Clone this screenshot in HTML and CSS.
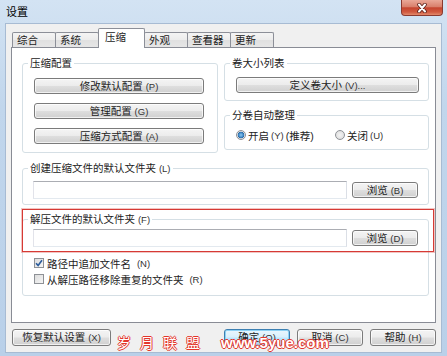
FILE: index.html
```html
<!DOCTYPE html>
<html lang="zh-CN">
<head>
    <meta charset="UTF-8">
    <meta name="viewport" content="width=device-width, initial-scale=1.0">
    <title>设置</title>
    <link rel="stylesheet" href="styles.css">
</head>
<body>
    <div class="window">
        <div class="titlebar">
            <span class="title">设置</span>
            <button class="close-btn">
                <svg width="16" height="10" viewBox="0 0 16 10">
                    <path d="M5 1.5 L11 8.5 M11 1.5 L5 8.5" stroke="#5b2119" stroke-width="3.6" stroke-linecap="round"/>
                    <path d="M5 1.5 L11 8.5 M11 1.5 L5 8.5" stroke="#fff" stroke-width="2" stroke-linecap="round"/>
                </svg>
            </button>
        </div>
        <div class="client">
            <div class="tabs">
                <div class="tab">综合</div>
                <div class="tab">系统</div>
                <div class="tab active">压缩</div>
                <div class="tab">外观</div>
                <div class="tab">查看器</div>
                <div class="tab">更新</div>
            </div>
            <div class="panel">
                <div class="top-row">
                    <fieldset class="group profiles">
                        <legend>压缩配置</legend>
                        <div class="group-body stack">
                            <button class="button">修改默认配置 <small>(P)</small></button>
                            <button class="button">管理配置 <small>(G)</small></button>
                            <button class="button">压缩方式配置 <small>(A)</small></button>
                        </div>
                    </fieldset>
                    <div class="side-col">
                        <fieldset class="group">
                            <legend>卷大小列表</legend>
                            <div class="group-body volumes">
                                <button class="button">定义卷大小 <small>(V)...</small></button>
                            </div>
                        </fieldset>
                        <fieldset class="group">
                            <legend>分卷自动整理</legend>
                            <div class="group-body radios">
                                <label class="radio first"><span class="radio-mark checked"></span>开启<small>(Y)</small> (推荐)</label>
                                <label class="radio"><span class="radio-mark"></span>关闭<small>(U)</small></label>
                            </div>
                        </fieldset>
                    </div>
                </div>
                <fieldset class="group create-folder">
                    <legend>创建压缩文件的默认文件夹 <small>(L)</small></legend>
                    <div class="group-body path-row">
                        <input type="text" class="path-input">
                        <button class="button browse">浏览 <small>(B)</small></button>
                    </div>
                </fieldset>
                <fieldset class="group extract-folder">
                    <legend>解压文件的默认文件夹 <small>(F)</small></legend>
                    <div class="group-body extract-body">
                        <div class="path-row">
                            <input type="text" class="path-input">
                            <button class="button browse">浏览 <small>(D)</small></button>
                        </div>
                        <label class="check first-check">
                            <span class="check-mark">
                                <svg width="8" height="8" viewBox="0 0 8 8">
                                    <path d="M1 4.2 L3.1 6.4 L7 1.2" fill="none" stroke="#2b5c9c" stroke-width="1.6"/>
                                </svg>
                            </span>路径中追加文件名 <small>(N)</small>
                        </label>
                        <label class="check"><span class="check-mark"></span>从解压路径移除重复的文件夹 <small>(R)</small></label>
                    </div>
                </fieldset>
                <div class="highlight"></div>
            </div>
            <div class="footer">
                <button class="button reset">恢复默认设置 <small>(X)</small></button>
                <button class="button default ok">确定 <small>(O)</small></button>
                <button class="button action">取消 <small>(C)</small></button>
                <button class="button action">帮助 <small>(H)</small></button>
            </div>
        </div>
        <div class="watermark"><span class="wm-cn">岁月联盟</span><span class="wm-en">www.5yue.com</span></div>
    </div>
</body>
</html>
```

FILE: styles.css
```css
* {
    box-sizing: border-box;
}
body {
    margin: 0;
    font-family: "Liberation Sans", "Noto Sans CJK SC", sans-serif;
    font-size: 10.5px;
    color: #222;
    background: #c4d8ed;
}
small {
    font-size: 9.5px;
    color: #333;
}
.window {
    position: relative;
    width: 447px;
    height: 356px;
    overflow: hidden;
    background: linear-gradient(#d3e3f3, #c1d6ec 30%, #b9d0e9);
}
.titlebar {
    display: flex;
    justify-content: space-between;
    height: 23px;
    padding: 0 4px 0 6px;
}
.title {
    font-size: 11px;
    line-height: 25px;
    color: #000;
}
.close-btn {
    display: flex;
    align-items: center;
    justify-content: center;
    width: 42px;
    height: 16px;
    padding: 0;
    border: 1px solid #8a3a30;
    border-top: none;
    border-radius: 0 0 4px 4px;
    background: linear-gradient(#eaa898, #d9806c 45%, #c5452f 52%, #d15a40 80%, #e28a6c);
}
.client {
    width: 437px;
    height: 330px;
    margin: 0 5px;
    padding: 4px 5px 0;
    background: #f0f0f0;
    border: 1px solid #a7bbd3;
}
.tabs {
    display: flex;
    align-items: flex-end;
    height: 19px;
    padding-left: 1px;
}
.tab {
    width: 44px;
    height: 15px;
    margin-right: -1px;
    padding-left: 4px;
    border: 1px solid #8c8f98;
    border-bottom: none;
    border-radius: 2px 2px 0 0;
    background: linear-gradient(#f4f4f4, #ececec 50%, #e0e0e0 51%, #e6e6e6);
    line-height: 14px;
    white-space: nowrap;
}
.tab.active {
    position: relative;
    z-index: 1;
    width: 47px;
    height: 20px;
    margin-bottom: -1px;
    padding-left: 6px;
    background: #fff;
    line-height: 16px;
}
.panel {
    position: relative;
    height: 276px;
    padding: 9px 6px 0 10px;
    background: #fff;
    border: 1px solid #898c95;
}
.top-row {
    display: flex;
    gap: 6px;
}
.group {
    min-width: 0;
    margin: 0;
    padding: 0;
    border: 1px solid #d5dfe5;
    border-radius: 3px;
}
.group legend {
    margin-left: 5px;
    padding: 0 2px;
    line-height: 12px;
}
.profiles {
    width: 196px;
}
.stack {
    display: flex;
    flex-direction: column;
    gap: 9px;
    padding: 9px 13px 8px 11px;
}
.side-col {
    display: flex;
    flex: 1;
    flex-direction: column;
    gap: 8px;
}
.volumes {
    display: flex;
    padding: 8px 9px 7px 11px;
}
.volumes .button {
    flex: 1;
}
.radios {
    display: flex;
    padding: 6px 9px 6px 11px;
}
.radio {
    display: flex;
    align-items: center;
    height: 16px;
    gap: 2px;
    white-space: nowrap;
}
.radio.first {
    width: 99px;
}
.radio-mark {
    width: 10px;
    height: 10px;
    border: 1px solid #8e9196;
    border-radius: 50%;
    background: radial-gradient(circle, #f4f4f4, #d9d9d9);
}
.radio-mark.checked {
    background: radial-gradient(circle, #8cc8f0 0, #3f86c4 2.4px, #1d5c97 3.2px, #eaeaea 3.6px, #dcdcdc 100%);
}
.button {
    height: 16px;
    padding: 0;
    border: 1px solid #7b7b7b;
    border-radius: 3px;
    background: linear-gradient(#f4f4f4, #ececec 48%, #dedede 52%, #d0d0d0);
    box-shadow: inset 0 0 0 1px rgba(255, 255, 255, 0.7);
    font: inherit;
    line-height: 13px;
    color: #222;
    white-space: nowrap;
}
.create-folder {
    margin-top: 9px;
}
.path-row {
    display: flex;
    align-items: center;
    gap: 5px;
}
.create-folder .path-row {
    padding: 6px 10px 5px 10px;
}
.path-input {
    flex: 1;
    height: 18px;
    margin: 0;
    border: 1px solid;
    border-color: #abadb3 #dbdfe6 #e3e9ef #e2e3ea;
    background: #fff;
}
.browse {
    width: 66px;
}
.extract-folder {
    margin-top: 8px;
}
.extract-body {
    padding: 3px 10px 8px 10px;
}
.check {
    display: flex;
    align-items: center;
    gap: 3px;
    height: 16px;
    padding-left: 1px;
    white-space: pre;
}
.first-check {
    margin-top: 8px;
}
.check-mark {
    display: flex;
    align-items: center;
    justify-content: center;
    width: 10px;
    height: 10px;
    border: 1px solid #8e9196;
    background: linear-gradient(135deg, #dcdcdc, #f6f6f6);
}
.highlight {
    position: absolute;
    left: 10px;
    top: 161px;
    width: 412px;
    height: 43px;
    border: 1px solid #d63a35;
    box-shadow: 0 0 0 1px rgba(214, 58, 53, 0.3);
}
.footer {
    display: flex;
    gap: 7px;
    margin-top: 6px;
    padding-left: 1px;
}
.footer .button {
    height: 17px;
}
.reset {
    width: 99px;
}
.ok {
    margin-left: auto;
    width: 66px;
}
.action {
    width: 66px;
}
.button.default {
    border-color: #3c7fb1;
    background: linear-gradient(#eaf6fd, #d9f0fc 48%, #bee6fd 52%, #a7d9f5);
    box-shadow: inset 0 0 0 1px #8fd2f4;
}
.watermark {
    position: absolute;
    left: 117px;
    top: 333px;
    display: flex;
    align-items: baseline;
    color: #fff;
    text-shadow: 1px 0 0 #e3362c, -1px 0 0 #e3362c, 0 1px 0 #e3362c, 0 -1px 0 #e3362c;
}
.wm-cn {
    font-size: 14px;
    line-height: 20px;
    letter-spacing: 9px;
}
.wm-en {
    margin-left: 12px;
    font-size: 15px;
    font-weight: bold;
    line-height: 20px;
}
```
